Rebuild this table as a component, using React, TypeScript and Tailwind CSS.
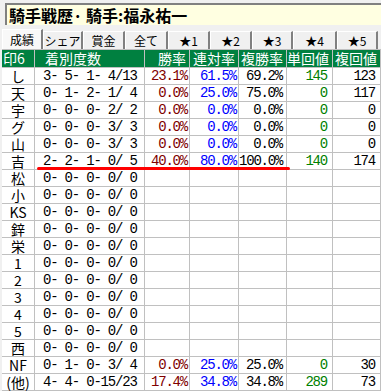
const tabs = [
  { label: '成績', w: 'w-[41px]', active: true },
  { label: 'シェア', w: 'w-[40px]' },
  { label: '賞金', w: 'w-[42px]' },
  { label: '全て', w: 'w-[43px]' },
  { label: '★1', w: 'w-[42px]' },
  { label: '★2', w: 'w-[42px]' },
  { label: '★3', w: 'w-[41px]' },
  { label: '★4', w: 'w-[44px]' },
  { label: '★5', w: 'w-[41px]' },
];

const headers = ['印6', '着別度数', '勝率', '連対率', '複勝率', '単回値', '複回値'];

type Row = [string, string, string?, string?, string?, string?, string?];

const rows: Row[] = [
  ['し', '3- 5- 1- 4/13', '23.1%', '61.5%', '69.2%', '145', '123'],
  ['天', '0- 1- 2- 1/ 4', '0.0%', '25.0%', '75.0%', '0', '117'],
  ['宇', '0- 0- 0- 2/ 2', '0.0%', '0.0%', '0.0%', '0', '0'],
  ['グ', '0- 0- 0- 3/ 3', '0.0%', '0.0%', '0.0%', '0', '0'],
  ['山', '0- 0- 0- 3/ 3', '0.0%', '0.0%', '0.0%', '0', '0'],
  ['吉', '2- 2- 1- 0/ 5', '40.0%', '80.0%', '100.0%', '140', '174'],
  ['松', '0- 0- 0- 0/ 0'],
  ['小', '0- 0- 0- 0/ 0'],
  ['KS', '0- 0- 0- 0/ 0'],
  ['鋅', '0- 0- 0- 0/ 0'],
  ['栄', '0- 0- 0- 0/ 0'],
  ['1', '0- 0- 0- 0/ 0'],
  ['2', '0- 0- 0- 0/ 0'],
  ['3', '0- 0- 0- 0/ 0'],
  ['4', '0- 0- 0- 0/ 0'],
  ['5', '0- 0- 0- 0/ 0'],
  ['西', '0- 0- 0- 0/ 0'],
  ['NF', '0- 1- 0- 3/ 4', '0.0%', '25.0%', '25.0%', '0', '30'],
  ['(他)', '4- 4- 0-15/23', '17.4%', '34.8%', '34.8%', '289', '73'],
];

const cjk = "font-['Noto_Sans_CJK_JP',sans-serif]";
const mono = "font-['Liberation_Mono','Noto_Sans_CJK_JP',monospace] text-[14px] tracking-[-1.2px]";
const grid = 'grid grid-cols-[33px_110px_45px_49px_48px_46px_48px]';
const cell = 'h-[17px] leading-[16px] border-r border-b border-[#c0c0c0] whitespace-pre';

const numColors = ['text-[#800000]', 'text-[#0000ff]', 'text-black', 'text-[#008000]', 'text-black'];
const numPads = ['pr-[2px]', 'pr-[2px]', 'pr-[4px]', 'pr-[5px]', 'pr-[5px]'];

export default function App() {
  return (
    <div className={`w-[381px] h-[391px] overflow-hidden bg-[#f0f0f0] ${cjk}`}>
      <div className="pt-[3px] pl-[5px]">
        <div className="h-[22px] w-[380px] bg-[#ffffe1] border-t-2 border-l-2 border-[#808080] pl-[2px] text-[16px] leading-[20px] font-bold text-black whitespace-nowrap">
          騎手戦歴· 騎手:福永祐一
        </div>
      </div>

      <div className="flex items-end h-[21px] mt-[3px] pl-[2px]">
        {tabs.map((t, i) => (
          <div
            key={i}
            className={`${t.w} text-center text-[12px] whitespace-nowrap overflow-hidden border-t border-l border-white border-r-2 border-r-[#808080] ${
              t.active ? 'h-[20px] leading-[19px] bg-[#f8f8f8]' : 'h-[18px] leading-[17px] bg-[#f0f0f0]'
            }`}
          >
            {t.label}
          </div>
        ))}
      </div>

      <div className="relative ml-[2px] border-t border-[#c0c0c0]">
        <div className={grid}>
          {headers.map((h, i) => (
            <div
              key={i}
              className={`h-[18px] leading-[17px] border-r border-b border-[#c0c0c0] whitespace-nowrap bg-[#008040] text-white text-[14px] ${
                i === 0 ? 'pl-[1px]' : i === 1 ? 'pl-[10px]' : 'text-right pr-[3px]'
              }`}
            >
              {h}
            </div>
          ))}
        </div>

        {rows.map((r, ri) => (
          <div key={ri} className={`${grid} bg-white`}>
            <div className={`${cell} text-center text-[14px] text-black`}>{r[0]}</div>
            <div className={`${cell} pl-[8px] ${mono} text-black`}>{r[1]}</div>
            {[2, 3, 4, 5, 6].map((ci, k) => (
              <div key={ci} className={`${cell} text-right ${numPads[k]} ${mono} ${numColors[k]}`}>
                {r[ci] ?? ''}
              </div>
            ))}
          </div>
        ))}

        <div className="absolute left-[35px] top-[117px] w-[253px] h-[3px] rounded-full bg-[#ff0000] blur-[0.4px]" />
      </div>
    </div>
  );
}
